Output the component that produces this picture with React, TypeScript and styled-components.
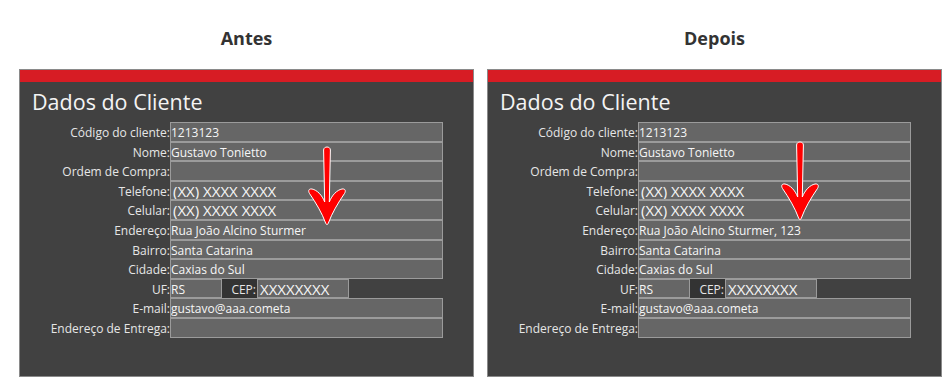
import styled, { createGlobalStyle } from 'styled-components';

const GlobalStyle = createGlobalStyle`
  html, body {
    margin: 0;
    padding: 0;
    background: #ffffff;
  }
  body {
    font-family: 'Open Sans', 'Noto Sans', Arial, sans-serif;
  }
`;

const Page = styled.div`
  display: flex;
  gap: 13px;
  padding-left: 19px;
`;

const Column = styled.div`
  width: 455px;
  display: flex;
  flex-direction: column;
`;

const Heading = styled.h2`
  margin: 28px 0 21px;
  height: 20px;
  line-height: 20px;
  text-align: center;
  font-size: 18px;
  font-weight: 700;
  color: #333333;
`;

const Panel = styled.div`
  position: relative;
  box-sizing: border-box;
  height: 308px;
  border: 1px solid #8a8a8a;
  background: #414141;
`;

const RedBar = styled.div`
  height: 12px;
  background: #d71c24;
`;

const Title = styled.div`
  height: 40px;
  line-height: 40px;
  padding-left: 12px;
  font-size: 21.5px;
  color: #f4f4f4;
`;

const Rows = styled.div`
  display: flex;
  flex-direction: column;
`;

const Row = styled.div`
  display: flex;
  height: 19.6px;
`;

const Label = styled.div`
  width: 150px;
  height: 19.6px;
  text-align: right;
  font-size: 12px;
  line-height: 21px;
  color: #e6e6e6;
  white-space: nowrap;
`;

const Field = styled.div<{ $w?: number; $big?: boolean }>`
  box-sizing: border-box;
  width: ${(p) => p.$w ?? 273}px;
  height: 19.6px;
  border: 1px solid #9b9b9b;
  background: #666666;
  padding-left: ${(p) => (p.$big ? 2 : 0)}px;
  font-size: ${(p) => (p.$big ? 15 : 12)}px;
  line-height: 19px;
  color: #f6f6f6;
  white-space: nowrap;
  overflow: hidden;
`;

const InlineLabel = styled.div<{ $w: number }>`
  box-sizing: border-box;
  width: ${(p) => p.$w}px;
  height: 19.6px;
  background: #333333;
  text-align: right;
  padding-right: 1px;
  font-size: 12px;
  line-height: 21px;
  color: #e6e6e6;
`;

const ArrowSvg = styled.svg<{ $x: number; $y: number }>`
  position: absolute;
  left: ${(p) => p.$x}px;
  top: ${(p) => p.$y}px;
  overflow: visible;
`;

function Arrow({ x, y }: { x: number; y: number }) {
  return (
    <ArrowSvg $x={x} $y={y} width="40" height="82" viewBox="0 0 40 82">
      <path
        d="M16.6,5 C16.6,1 23.4,1 23.4,5 L22.3,57 C25,50 30,45 35,44 C38.5,43.5 39,46 37.5,48.5 C31,58 25,68 21.2,78.5 C20.8,79.8 19.2,79.8 18.8,78.5 C15,68 9,58 2.5,48.5 C1,46 1.5,43.5 5,44 C10,45 15,50 17.7,57 Z"
        fill="#ff0000"
        stroke="#ffffff"
        strokeWidth="1"
      />
    </ArrowSvg>
  );
}

type Client = { endereco: string };

function ClientForm({ data, arrow }: { data: Client; arrow: { x: number; y: number } }) {
  return (
    <Panel>
      <RedBar />
      <Title>Dados do Cliente</Title>
      <Rows>
        <Row>
          <Label>Código do cliente:</Label>
          <Field>1213123</Field>
        </Row>
        <Row>
          <Label>Nome:</Label>
          <Field>Gustavo Tonietto</Field>
        </Row>
        <Row>
          <Label>Ordem de Compra:</Label>
          <Field />
        </Row>
        <Row>
          <Label>Telefone:</Label>
          <Field $big>(XX) XXXX XXXX</Field>
        </Row>
        <Row>
          <Label>Celular:</Label>
          <Field $big>(XX) XXXX XXXX</Field>
        </Row>
        <Row>
          <Label>Endereço:</Label>
          <Field>{data.endereco}</Field>
        </Row>
        <Row>
          <Label>Bairro:</Label>
          <Field>Santa Catarina</Field>
        </Row>
        <Row>
          <Label>Cidade:</Label>
          <Field>Caxias do Sul</Field>
        </Row>
        <Row>
          <Label>UF:</Label>
          <Field $w={52}>RS</Field>
          <InlineLabel $w={35}>CEP:</InlineLabel>
          <Field $w={92} $big>XXXXXXXX</Field>
        </Row>
        <Row>
          <Label>E-mail:</Label>
          <Field>gustavo@aaa.cometa</Field>
        </Row>
        <Row>
          <Label>Endereço de Entrega:</Label>
          <Field />
        </Row>
      </Rows>
      <Arrow x={arrow.x} y={arrow.y} />
    </Panel>
  );
}

export default function App() {
  return (
    <>
      <GlobalStyle />
      <Page>
        <Column>
          <Heading>Antes</Heading>
          <ClientForm data={{ endereco: 'Rua João Alcino Sturmer' }} arrow={{ x: 287, y: 75 }} />
        </Column>
        <Column>
          <Heading>Depois</Heading>
          <ClientForm data={{ endereco: 'Rua João Alcino Sturmer, 123' }} arrow={{ x: 291.5, y: 70 }} />
        </Column>
      </Page>
    </>
  );
}
